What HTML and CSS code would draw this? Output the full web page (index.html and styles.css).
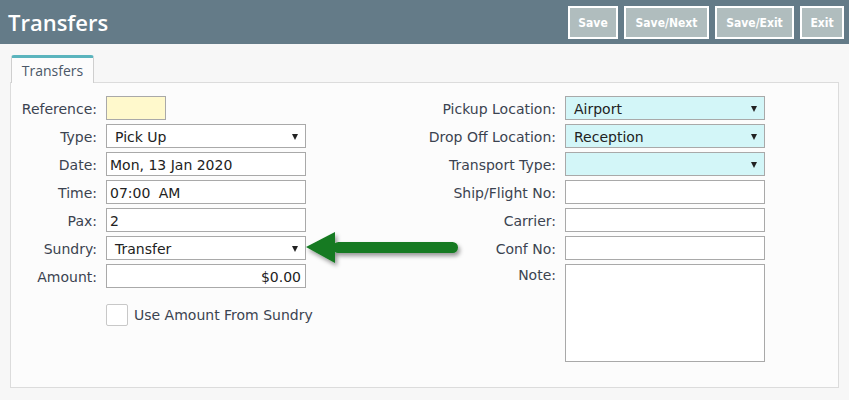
FILE: index.html
```html
<!DOCTYPE html>
<html>
<head>
<meta charset="utf-8">
<link rel="stylesheet" href="styles.css">
</head>
<body>
<header class="topbar">
  <h1 class="title">Transfers</h1>
  <div class="actions">
    <button class="btn btn-save">Save</button>
    <button class="btn btn-next">Save/Next</button>
    <button class="btn btn-sexit">Save/Exit</button>
    <button class="btn btn-exit">Exit</button>
  </div>
</header>
<main class="content">
  <div class="tabs"><div class="tab">Transfers</div></div>
  <section class="panel">
    <div class="col col-left">
      <div class="row"><label class="lbl">Reference:</label><div class="field ref"></div></div>
      <div class="row"><label class="lbl">Type:</label><div class="field sel">Pick Up<span class="caret"></span></div></div>
      <div class="row"><label class="lbl">Date:</label><div class="field txt">Mon, 13 Jan 2020</div></div>
      <div class="row"><label class="lbl">Time:</label><div class="field txt time">07:00 AM</div></div>
      <div class="row"><label class="lbl">Pax:</label><div class="field txt">2</div></div>
      <div class="row"><label class="lbl">Sundry:</label><div class="field sel">Transfer<span class="caret"></span></div></div>
      <div class="row"><label class="lbl">Amount:</label><div class="field txt num">$0.00</div></div>
      <div class="row check-row"><span class="lbl"></span><span class="checkbox"></span><span class="check-label">Use Amount From Sundry</span></div>
    </div>
    <div class="col col-right">
      <div class="row"><label class="lbl">Pickup Location:</label><div class="field sel cyan">Airport<span class="caret"></span></div></div>
      <div class="row"><label class="lbl">Drop Off Location:</label><div class="field sel cyan">Reception<span class="caret"></span></div></div>
      <div class="row"><label class="lbl">Transport Type:</label><div class="field sel cyan"><span class="caret"></span></div></div>
      <div class="row"><label class="lbl">Ship/Flight No:</label><div class="field txt"></div></div>
      <div class="row"><label class="lbl">Carrier:</label><div class="field txt"></div></div>
      <div class="row"><label class="lbl">Conf No:</label><div class="field txt"></div></div>
      <div class="row note-row"><label class="lbl">Note:</label><div class="field note"></div></div>
    </div>
    <svg class="arrow" width="164" height="44" viewBox="0 0 164 44">
      <defs>
        <filter id="sh" x="-10%" y="-30%" width="130%" height="170%">
          <feDropShadow dx="2" dy="3" stdDeviation="2" flood-color="#000" flood-opacity="0.4"/>
        </filter>
      </defs>
      <g filter="url(#sh)" fill="#137a20">
        <polygon points="1,17 30,2 30,33"/>
        <rect x="28" y="12" width="125" height="11" rx="5.5"/>
      </g>
    </svg>
  </section>
</main>
</body>
</html>
```
FILE: styles.css
```css
* { box-sizing: border-box; }
html, body { margin: 0; padding: 0; }
body {
  width: 849px;
  height: 400px;
  background: #f7f7f7;
  font-family: "DejaVu Sans", Verdana, sans-serif;
  font-size: 14px;
  color: #333;
  overflow: hidden;
}
.topbar {
  height: 44px;
  background: #647b88;
  display: flex;
  align-items: center;
  justify-content: space-between;
  padding: 0 5px 0 8px;
}
.title {
  margin: 0;
  color: #fff;
  font-family: "Open Sans", sans-serif;
  font-weight: 600;
  font-size: 22px;
}
.actions { display: flex; gap: 6px; margin-top: 1px; }
.btn {
  height: 33px;
  border: 2px solid #fff;
  background: #b0bdbe;
  color: #fff;
  font-family: "DejaVu Sans Condensed", "DejaVu Sans", sans-serif;
  font-weight: bold;
  font-size: 12px;
  padding: 0;
  display: flex;
  align-items: center;
  justify-content: center;
}
.btn-save { width: 50px; }
.btn-next { width: 85px; }
.btn-sexit { width: 79px; }
.btn-exit { width: 44px; }
.content { padding: 11px 10px 0 10px; }
.tabs { display: flex; padding-left: 1px; }
.tab {
  width: 83px;
  height: 28px;
  margin-bottom: -1px;
  background: #fcfcfc;
  border: 1px solid #cfcfcf;
  border-top: 3px solid #5ab4bd;
  border-bottom: none;
  border-radius: 3px 3px 0 0;
  font-family: "Open Sans", sans-serif;
  font-size: 14px;
  color: #4b5868;
  display: flex;
  align-items: center;
  justify-content: center;
  padding-bottom: 1px;
  position: relative;
  z-index: 1;
}
.panel {
  position: relative;
  width: 829px;
  height: 306px;
  background: #fcfcfc;
  border: 1px solid #dcdcdc;
  display: flex;
  padding-top: 13px;
}
.col { display: flex; flex-direction: column; gap: 4px; }
.col-left { width: 340px; }
.col-left .lbl { width: 86px; }
.col-right .lbl { width: 205px; }
.row { display: flex; align-items: center; gap: 9px; height: 24px; }
.lbl {
  text-align: right;
  color: #3b4350;
  white-space: nowrap;
  flex: none;
  padding-top: 1px;
}
.field {
  flex: none;
  width: 200px;
  height: 24px;
  border: 1px solid #a9a9a9;
  background: #fff;
  color: #222;
  display: flex;
  align-items: center;
  position: relative;
  white-space: pre;
  padding-top: 2px;
}
.txt { padding-left: 3px; }
.time { word-spacing: 4px; }
.num { justify-content: flex-end; padding-right: 4px; }
.sel { padding-left: 8px; }
.ref { width: 60px; background: #fff9cc; }
.cyan { background: #d3f6f8; }
.caret {
  position: absolute;
  right: 7px;
  top: 9px;
  width: 0; height: 0;
  border-left: 3.5px solid transparent;
  border-right: 3.5px solid transparent;
  border-top: 6px solid #222;
}
.check-row { margin-top: 12px; height: 22px; }
.checkbox {
  width: 22px; height: 22px;
  border: 1px solid #c8c8c8;
  border-radius: 2px;
  background: #fff;
  flex: none;
}
.check-label { margin-left: -3px; color: #3b4350; }
.note-row { align-items: flex-start; height: 98px; }
.note-row .lbl { padding-top: 3px; }
.note { height: 98px; }
.arrow {
  position: absolute;
  left: 294px;
  top: 147px;
}
```
